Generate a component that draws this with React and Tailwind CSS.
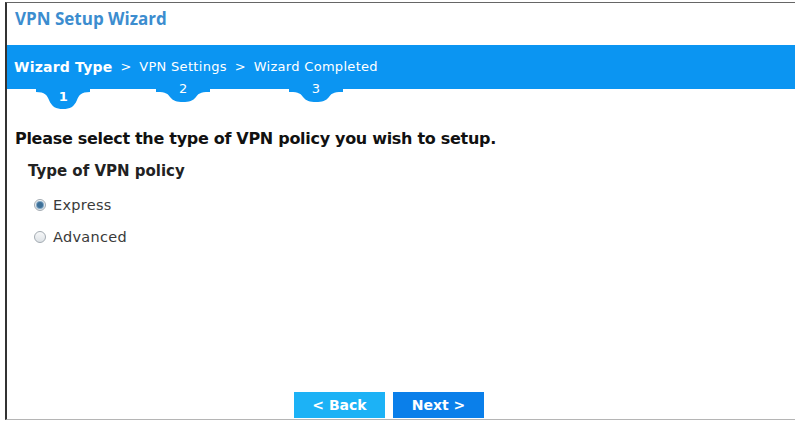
import { useState } from "react";

const STEPS = [
  { label: "Wizard Type", num: 1 },
  { label: "VPN Settings", num: 2 },
  { label: "Wizard Completed", num: 3 },
];

const WIDE = { fontFamily: '"DejaVu Sans", "Open Sans", sans-serif' };

// little rounded tab hanging under the step bar
function StepTab({ active }) {
  const d = active
    ? "M0 0 C9 0 11 3 13 8 C16 15 20 17 27 17 C34 17 38 15 41 8 C43 3 45 0 54 0 Z"
    : "M0 0 C9 0 11 2 13 5 C16 9 20 10 26 10 C32 10 36 9 39 5 C41 2 43 0 52 0 Z";
  return (
    <svg width={active ? 54 : 52} height={active ? 17 : 10} className="block" viewBox={active ? "0 0 54 17" : "0 0 52 10"}>
      <path d={d} fill="#0b95f2" />
    </svg>
  );
}

function Step({ label, num, active }) {
  return (
    <div className="relative flex flex-col items-center">
      <span
        className={`leading-[16px] text-white whitespace-nowrap ${active ? "font-bold text-[14px] tracking-[0.2px]" : "font-normal text-[13px] tracking-[0.3px]"}`}
      >
        {label}
      </span>
      <div className="absolute top-[22px] left-1/2 -translate-x-1/2 flex flex-col items-center">
        <div className="h-[11px] w-[54px] bg-[#0b95f2]" />
        <StepTab active={active} />
        <span
          className={`absolute left-1/2 -translate-x-1/2 text-[13px] leading-none text-white ${active ? "top-[9px] font-bold" : "top-[1px]"}`}
        >
          {num}
        </span>
      </div>
    </div>
  );
}

function Radio({ checked, label, onClick }) {
  return (
    <label className="flex items-center gap-[7px] cursor-pointer" onClick={onClick}>
      <span className="w-[12px] h-[12px] rounded-full border border-[#a3abb2] bg-[linear-gradient(#f7f8f9,#dde2e6)] flex items-center justify-center">
        {checked && <span className="w-[6px] h-[6px] rounded-full bg-[#3d6f97] ring-1 ring-[#7fa6c4]" />}
      </span>
      <span className="text-[14.5px] leading-[18px] text-[#3a3a3a] tracking-[0.3px]" style={WIDE}>
        {label}
      </span>
    </label>
  );
}

export default function App() {
  const [kind, setKind] = useState("express");

  return (
    <div className="w-[795px] h-[421px] bg-white pt-[2px] pl-[5px] overflow-hidden" style={WIDE}>
      <div className="h-[418px] flex flex-col border-t border-t-[#666] border-l-2 border-l-[#333] border-b border-b-[#b5b5b5]">
        {/* Title */}
        <div className="h-[42px] pl-[8px] pt-[3px]">
          <h1 className="text-[17px] font-bold text-[#3c8dcf]" style={{ fontFamily: '"Open Sans", sans-serif' }}>
            VPN Setup Wizard
          </h1>
        </div>

        {/* Step bar */}
        <div className="h-[44px] bg-[#0b95f2] flex items-start pt-[14px] pl-[7px]">
          <div className="flex items-start gap-[8px]">
            <Step {...STEPS[0]} active />
            <span className="text-[13px] leading-[16px] text-white">&gt;</span>
            <Step {...STEPS[1]} />
            <span className="text-[13px] leading-[16px] text-white">&gt;</span>
            <Step {...STEPS[2]} />
          </div>
        </div>

        {/* Body */}
        <div className="flex-1 flex flex-col pl-[8px] pt-[40px]">
          <p className="text-[16px] font-bold text-[#111] leading-[20px] tracking-[-0.3px]">
            Please select the type of VPN policy you wish to setup.
          </p>
          <p className="mt-[13px] pl-[13px] text-[15px] font-bold text-[#222] leading-[18px]">Type of VPN policy</p>
          <div className="mt-[16px] pl-[19px] flex flex-col gap-[14px]">
            <Radio checked={kind === "express"} label="Express" onClick={() => setKind("express")} />
            <Radio checked={kind === "advanced"} label="Advanced" onClick={() => setKind("advanced")} />
          </div>
        </div>

        {/* Buttons */}
        <div className="flex justify-center gap-[8px] pr-[24px] pb-[1px]">
          <button className="w-[91px] h-[26px] bg-[#1cb2f6] text-white text-[14px] font-bold">&lt; Back</button>
          <button className="w-[91px] h-[26px] bg-[#0a7fea] text-white text-[14px] font-bold">Next &gt;</button>
        </div>
      </div>
    </div>
  );
}
